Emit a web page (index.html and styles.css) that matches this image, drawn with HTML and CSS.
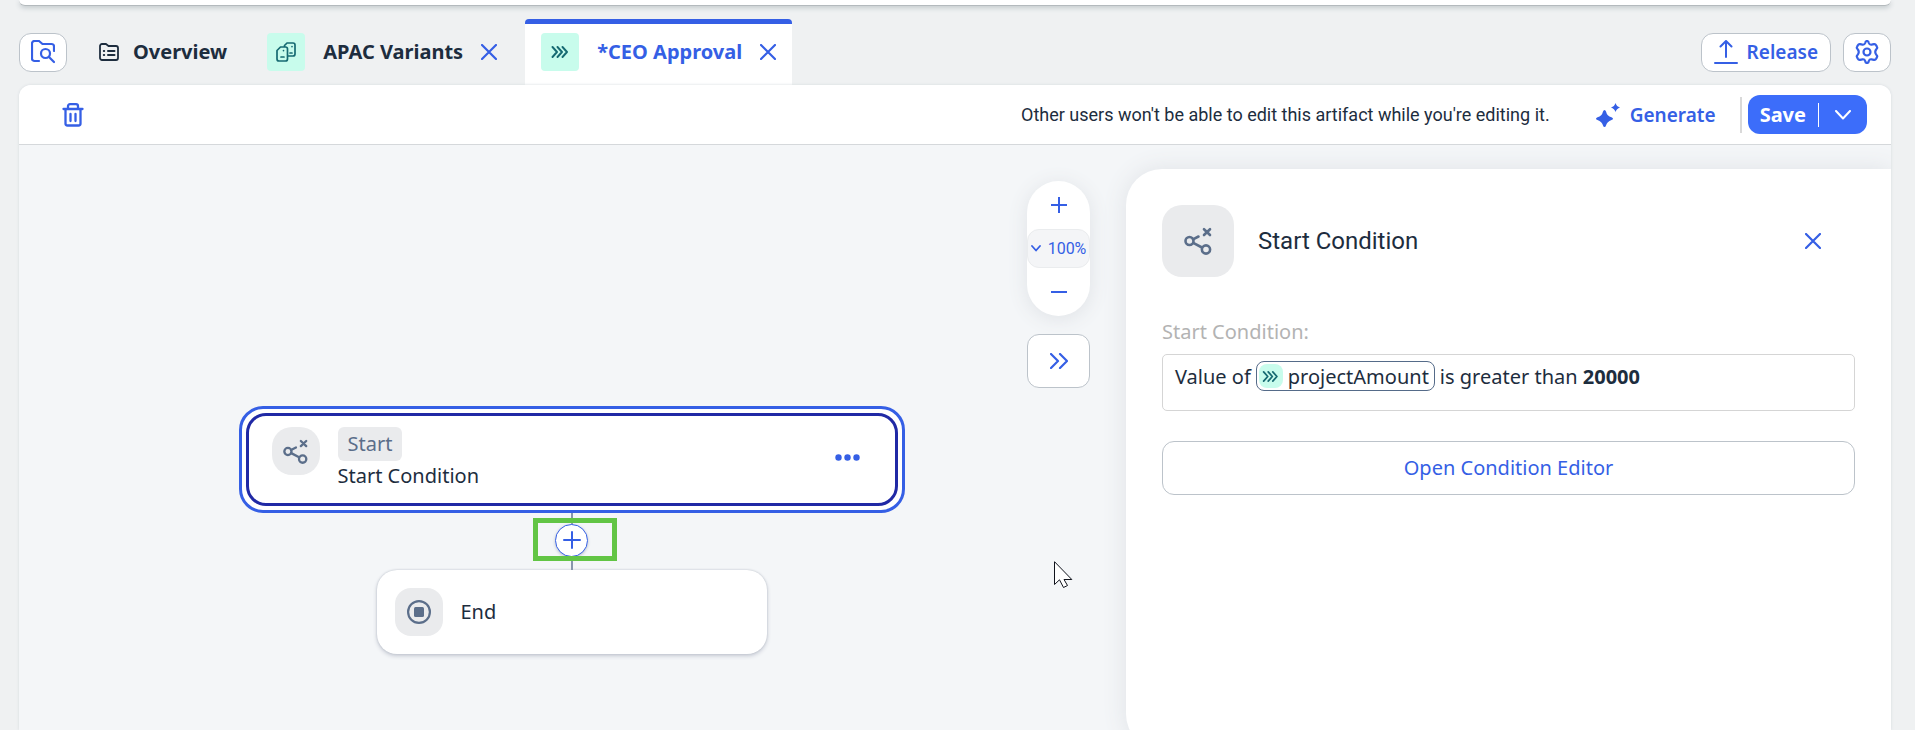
FILE: index.html
```html
<!DOCTYPE html>
<html lang="en">
<head>
<meta charset="utf-8">
<title>CEO Approval</title>
<link rel="stylesheet" href="styles.css">
</head>
<body>
<svg class="defs" aria-hidden="true">
  <symbol id="close" viewBox="0 0 16 16"><path d="M1 1 15 15M15 1 1 15" fill="none" stroke="currentColor" stroke-width="2.200" stroke-linecap="round"/></symbol>
  <symbol id="chevrons" viewBox="0 0 18 12"><path d="M1.500 1 6 6 1.500 11M6.500 1 11 6 6.500 11M11.500 1 16 6 11.500 11" fill="none" stroke="currentColor" stroke-width="1.900" stroke-linecap="round" stroke-linejoin="round"/></symbol>
  <symbol id="branch" viewBox="0 0 28 28"><g fill="none" stroke="currentColor" stroke-width="2.600" stroke-linecap="round"><circle cx="5.500" cy="14" r="4"/><circle cx="22" cy="22.500" r="4.100"/><path d="M9 12.300 14.500 9.500M9.200 15.800 18 20.500M20 2.200 26 8M26 2.200 20 8"/></g></symbol>
</svg>
<div class="shell">
  <div class="upper-card"></div>
  <header class="tabbar">
    <button class="square-btn" aria-label="Find artifact">
      <svg width="24" height="24" viewBox="0 0 24 24" fill="none" stroke="currentColor" stroke-width="2.200" stroke-linecap="round" stroke-linejoin="round"><path d="M8 21H3.500A2.500 2.500 0 0 1 1 18.500V3.500A2.500 2.500 0 0 1 3.500 1H8L11.500 4H20.500A2.500 2.500 0 0 1 23 6.500V11"/><circle cx="14.500" cy="13.500" r="4.500"/><path d="M18 17 23 22"/></svg>
    </button>
    <nav class="tabs">
      <a class="tab tab-overview" href="#overview">
        <svg width="20" height="18" viewBox="0 0 20 18" fill="none" stroke="currentColor" stroke-width="1.800" stroke-linecap="round" stroke-linejoin="round"><path d="M1 14.500V3A2 2 0 0 1 3 1H7L9.500 3H17A2 2 0 0 1 19 5V15A2 2 0 0 1 17 17H3A2 2 0 0 1 1 15Z"/><path d="M9 8H15.500M9 12H15.500M4.800 8H5.200M4.800 12H5.200" stroke-width="2"/></svg>
        Overview
      </a>
      <div class="tab">
        <span class="chip"><svg width="20" height="20" viewBox="0 0 20 20" fill="none" stroke="currentColor" stroke-width="1.700" stroke-linecap="round" stroke-linejoin="round"><path d="M4.500 5H9.500A2 2 0 0 1 11.500 7V17A2 2 0 0 1 9.500 19H3A2 2 0 0 1 1 17V8.500ZM5 15H8M7.500 8.500V8.600M8.500 4.500V3.500L11 1H17A2 2 0 0 1 19 3V12A2 2 0 0 1 17 14H12M14 11H16M16 4.500V4.600"/></svg></span>
        <a class="tab-link" href="#apac">APAC Variants</a>
        <button class="icon-btn" aria-label="Close APAC Variants"><svg width="16" height="16"><use href="#close"/></svg></button>
      </div>
      <div class="tab tab-active">
        <span class="chip"><svg width="18" height="12"><use href="#chevrons"/></svg></span>
        <a class="tab-link" href="#ceo">*CEO Approval</a>
        <button class="icon-btn" aria-label="Close CEO Approval"><svg width="16" height="16"><use href="#close"/></svg></button>
      </div>
    </nav>
    <div class="tab-actions">
      <button class="release-btn">
        <svg width="24" height="24" viewBox="0 0 24 24" fill="none" stroke="currentColor" stroke-width="2" stroke-linecap="round" stroke-linejoin="round"><path d="M1 23H23M12 17V1M6.500 6.500 12 1 17.500 6.500"/></svg>
        Release
      </button>
      <button class="square-btn" aria-label="Settings">
        <svg width="24" height="24" viewBox="0 0 24 24" fill="none" stroke="currentColor" stroke-width="2.200" stroke-linejoin="round"><path d="M10.200 3Q10.500 1 12 1T13.800 3Q14.500 5 16.500 4.700L19 4.200Q20.500 4 21.300 5.500L22 7Q22.600 8 21.500 9Q19 12 21.500 15Q22.600 16 22 17L21.300 18.500Q20.500 20 19 19.800L16.500 19.300Q14.500 19 13.800 21Q13.500 23 12 23T10.200 21Q9.500 19 7.500 19.300L5 19.800Q3.500 20 2.700 18.500L2 17Q1.400 16 2.500 15Q5 12 2.500 9Q1.400 8 2 7L2.700 5.500Q3.500 4 5 4.200L7.500 4.700Q9.500 5 10.200 3Z"/><circle cx="12" cy="12" r="3.500"/></svg>
      </button>
    </div>
  </header>
  <main class="editor">
    <div class="toolbar">
      <button class="icon-btn" aria-label="Delete"><svg width="22" height="24" viewBox="0 0 22 24" fill="none" stroke="currentColor" stroke-width="2.300" stroke-linecap="round" stroke-linejoin="round"><path d="M1.500 6H20.500M3.500 6V20.500A2 2 0 0 0 5.500 22.500H16.500A2 2 0 0 0 18.500 20.500V6M6 6V3.200A2 2 0 0 1 8 1.200H14A2 2 0 0 1 16 3.200V6M8.500 11V18M13.500 11V18"/></svg></button>
      <p class="lock-note">Other users won't be able to edit this artifact while you're editing it.</p>
      <button class="generate-btn">
        <svg width="24" height="24" viewBox="0 0 24 24" fill="currentColor"><path d="M8.500 7Q9.500 7 10 8.500 11 13 15.500 14.300 17 15 17 15.700T15.500 17Q11 18.500 10 22.500 9.500 24 8.500 24T7 22.500Q6 18.500 1.500 17 0 16.400 0 15.700T1.500 14.300Q6 13 7 8.500 7.500 7 8.500 7ZM19.500 0Q20.500 3.500 24 4.500 20.500 5.500 19.500 9 18.500 5.500 15 4.500 18.500 3.500 19.500 0Z"/></svg>
        Generate
      </button>
      <div class="save-group">
        <div class="split">
          <button class="save-btn">Save</button>
          <button class="save-menu" aria-label="More save options"><svg width="16" height="10" viewBox="0 0 16 10" fill="none" stroke="currentColor" stroke-width="2" stroke-linecap="round" stroke-linejoin="round"><path d="M1 1 8 8.500 15 1"/></svg></button>
        </div>
      </div>
    </div>
    <div class="workspace">
      <section class="canvas" aria-label="Process flow">
        <div class="node-focus">
          <article class="node-start">
            <span class="node-icon"><svg width="25" height="25"><use href="#branch"/></svg></span>
            <div class="node-text"><span class="badge">Start</span><span>Start Condition</span></div>
            <button class="icon-btn" aria-label="More actions"><svg width="25" height="7" viewBox="0 0 25 7" fill="currentColor"><circle cx="3.500" cy="3.500" r="3.200"/><circle cx="12.500" cy="3.500" r="3.200"/><circle cx="21.500" cy="3.500" r="3.200"/></svg></button>
          </article>
        </div>
        <div class="connector">
          <button class="add-btn" aria-label="Add step"><svg width="18" height="18" viewBox="0 0 18 18" fill="none" stroke="currentColor" stroke-width="2" stroke-linecap="round"><path d="M9 1V17M1 9H17"/></svg></button>
          <span class="highlight"></span>
        </div>
        <article class="node-end">
          <span class="node-icon"><svg width="24" height="24" viewBox="0 0 24 24"><circle cx="12" cy="12" r="10.900" fill="none" stroke="currentColor" stroke-width="2.200"/><rect x="7" y="7" width="10" height="10" rx="1.500" fill="currentColor"/></svg></span>
          <span>End</span>
        </article>
        <div class="view-controls">
          <div class="zoom">
            <button class="zoom-step" aria-label="Zoom in"><svg width="16" height="16" viewBox="0 0 16 16" fill="none" stroke="currentColor" stroke-width="2"><path d="M8 0V16M0 8H16"/></svg></button>
            <button class="zoom-level"><svg width="10" height="7" viewBox="0 0 10 7" fill="none" stroke="currentColor" stroke-width="1.800" stroke-linecap="round" stroke-linejoin="round"><path d="M1 1 5 5.500 9 1"/></svg>100%</button>
            <button class="zoom-step" aria-label="Zoom out"><svg width="16" height="2" viewBox="0 0 16 2" stroke="currentColor" stroke-width="2"><path d="M0 1H16"/></svg></button>
          </div>
          <button class="collapse-btn" aria-label="Collapse panel"><svg width="18" height="16" viewBox="0 0 18 16" fill="none" stroke="currentColor" stroke-width="2.200" stroke-linecap="round" stroke-linejoin="round"><path d="M1 1 8 8 1 15M10 1 17 8 10 15"/></svg></button>
        </div>
        <svg class="pointer" width="20" height="28" viewBox="0 0 20 28"><path d="M.5.700V23.500L5.500 18.800 9.500 26.500 13.500 24.500 10 18.500H17.800Z" fill="#fff" stroke="#10131c"/></svg>
      </section>
      <aside class="panel">
        <div class="panel-head">
          <span class="panel-icon"><svg width="28" height="28"><use href="#branch"/></svg></span>
          <h2 class="panel-title">Start Condition</h2>
          <button class="icon-btn" aria-label="Close panel"><svg width="16" height="16"><use href="#close"/></svg></button>
        </div>
        <h3 class="field-label">Start Condition:</h3>
        <div class="condition">
          <span>Value of</span>
          <span class="token"><span class="token-icon"><svg width="17" height="11"><use href="#chevrons"/></svg></span>projectAmount</span>
          <span>is greater than <b>20000</b></span>
        </div>
        <button class="open-btn">Open Condition Editor</button>
      </aside>
    </div>
  </main>
</div>
</body>
</html>
```
FILE: styles.css
```css
* { box-sizing: border-box; }
body {
  margin: 0;
  background: #eff1f2;
  color: #1d2d3e;
  font: 20px/24px "Noto Sans", sans-serif;
}
button { border: 0; background: none; padding: 0; margin: 0; font: inherit; color: #355fe5; cursor: pointer; display: flex; align-items: center; justify-content: center; }
a { color: inherit; text-decoration: none; }
svg { display: block; flex: none; }
.defs { position: absolute; width: 0; height: 0; }
.shell { display: flex; flex-direction: column; min-height: 100vh; padding: 0 24px 0 19px; overflow: hidden; }
.upper-card { height: 6px; background: #fff; border-bottom: 1px solid #b4babd; border-radius: 0 0 12px 12px; box-shadow: 0 2px 5px #c3cacd; }

.tabbar { display: flex; align-items: center; height: 79px; padding-top: 13px; }
.square-btn, .release-btn { height: 39px; background: #fff; border: 1px solid #bcc3ca; border-radius: 12px; }
.square-btn { width: 48px; }
.tabs { display: flex; align-self: flex-end; font-weight: 700; }
.tab { display: flex; align-items: center; height: 66px; padding: 0 16px 5px; border-top: 5px solid transparent; }
.tab-overview { padding-left: 32px; padding-right: 24px; gap: 14px; }
.tab-active { background: #fff; border-top-color: #355fe5; border-radius: 4px 4px 0 0; color: #355fe5; margin-left: 12px; }
.chip { display: flex; align-items: center; justify-content: center; width: 38px; height: 38px; margin-right: 18px; background: #c8fcec; border-radius: 4px; color: #166a72; }
.tab-link { margin-right: 18px; }
.tab-actions { display: flex; gap: 12px; margin-left: auto; }
.release-btn { gap: 9px; padding: 0 12px; font-weight: 600; font-size: 19px; }

.editor { flex: 1; display: flex; flex-direction: column; background: #f4f6f8; border-radius: 12px 12px 0 0; box-shadow: 0 0 3px #d5d9dd; }
.toolbar { display: flex; align-items: center; height: 60px; padding: 0 24px 0 43px; background: #fff; border-bottom: 1px solid #d5d8db; border-radius: 12px 12px 0 0; }
.lock-note { margin: 0 46px 0 auto; font-family: Roboto, sans-serif; font-size: 18px; }
.generate-btn { gap: 10px; margin-right: 24px; font-weight: 600; font-size: 19px; }
.save-group { padding-left: 6px; border-left: 2px solid #d9d9d9; height: 36px; display: flex; align-items: center; }
.split { display: flex; align-items: center; height: 39px; flex: none; background: #3c6dfa; border-radius: 12px; }
.split button { color: #fff; }
.save-btn { padding: 0 12px; font-weight: 700; }
.save-menu { height: 24px; padding: 0 16px; border-left: 1px solid #fff; }

.workspace { flex: 1; display: grid; grid-template-columns: 1107fr 765fr; }
.canvas { position: relative; display: flex; flex-direction: column; align-items: center; padding: 261px 26px 24px 24px; }
.node-focus { width: 666px; max-width: 100%; padding: 4px; background: #fff; border: 3px solid #355fe5; border-radius: 24px; }
.node-start { display: flex; align-items: center; padding: 11px 35px 15px 23px; border: 3px solid #2029a5; border-radius: 20px; }
.node-icon { flex: none; display: flex; align-items: center; justify-content: center; width: 48px; height: 48px; border-radius: 20px; background: #eaebed; color: #5b6e8a; }
.node-start .node-icon { align-self: flex-start; }
.node-text { display: flex; flex-direction: column; align-items: flex-start; gap: 3px; margin: 0 auto 0 18px; }
.badge { padding: 5px 10px; border-radius: 6px; background: #eaebed; color: #5b6e8a; }
.connector { position: relative; height: 57px; display: flex; align-items: center; justify-content: center; padding-bottom: 3px; background: linear-gradient(#8796ac, #8796ac) center / 2px 100% no-repeat; }
.add-btn { width: 33px; height: 33px; background: #fff; border: 1px solid #355fe5; border-radius: 50%; box-shadow: 0 1px 3px #b9c1cd; }
.highlight { position: absolute; left: -22px; top: 5px; width: 84px; height: 43px; border: 5px solid #62c545; pointer-events: none; }
.node-end { display: flex; align-items: center; gap: 18px; width: 390px; padding: 18px; background: #fff; border-radius: 20px; box-shadow: 0 0 2px #b9bfc8, 0 2px 4px #c5c9d3; }
.node-end .node-icon { border-radius: 16px; }
.view-controls { position: absolute; right: 36px; top: 36px; display: flex; flex-direction: column; gap: 18px; width: 63px; }
.zoom { display: flex; flex-direction: column; background: #fff; border-radius: 32px; box-shadow: 0 3px 20px #dfe2e6; }
.zoom-step { height: 48px; }
.zoom-level { height: 39px; gap: 7px; font-family: Roboto, sans-serif; font-size: 16px; background: #f4f5f7; border: 1px solid #eaecee; border-radius: 12px; }
.collapse-btn { height: 54px; background: #fff; border: 1px solid #bcc3ca; border-radius: 12px; }
.pointer { position: absolute; left: 1035px; top: 416px; }

.panel { margin: 24px 0 -20px; padding: 36px; background: #fff; border-radius: 36px 0 0 36px; box-shadow: 0 0 24px #dfe2e6; clip-path: inset(-24px 0 0 -30px); }
.panel-head { display: flex; align-items: center; padding-right: 34px; margin-bottom: 40px; }
.panel-icon { display: flex; align-items: center; justify-content: center; width: 72px; height: 72px; border-radius: 20px; background: #eaebed; color: #5b6e8a; }
.panel-title { margin: 0 auto 0 24px; font-family: Roboto, sans-serif; font-size: 24px; font-weight: 400; }
.field-label { margin: 0 0 8px; font-size: 20px; line-height: 29px; font-weight: 400; color: #b3b3b3; }
.condition { display: flex; align-items: flex-start; gap: 5px; min-height: 57px; padding: 6px 12px; border: 1px solid #d5d5d5; border-radius: 5px; line-height: 31px; }
.token { display: flex; align-items: center; gap: 5px; height: 30px; padding: 0 5px 0 2px; border: 1px solid #556b89; border-radius: 8px; }
.token-icon { display: flex; align-items: center; justify-content: center; width: 24px; height: 24px; border-radius: 8px; background: #c8fcec; color: #166a72; }
.open-btn { width: 100%; height: 54px; margin-top: 30px; border: 1px solid #bcc3ca; border-radius: 12px; }
```
